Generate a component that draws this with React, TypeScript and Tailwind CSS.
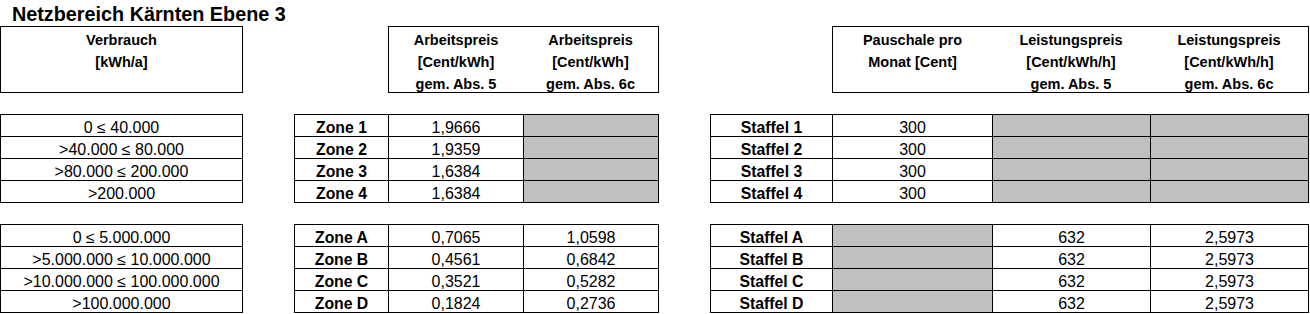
const font = { fontFamily: '"Liberation Sans", Arial, sans-serif' }

type Cell = { text?: string; gray?: boolean; bold?: boolean }

const verbrauch1 = ['0 ≤ 40.000', '>40.000 ≤ 80.000', '>80.000 ≤ 200.000', '>200.000']
const verbrauch2 = ['0 ≤ 5.000.000', '>5.000.000 ≤ 10.000.000', '>10.000.000 ≤ 100.000.000', '>100.000.000']

const zones1: Cell[][] = [
  [{ text: 'Zone 1', bold: true }, { text: '1,9666' }, { gray: true }],
  [{ text: 'Zone 2', bold: true }, { text: '1,9359' }, { gray: true }],
  [{ text: 'Zone 3', bold: true }, { text: '1,6384' }, { gray: true }],
  [{ text: 'Zone 4', bold: true }, { text: '1,6384' }, { gray: true }],
]

const zones2: Cell[][] = [
  [{ text: 'Zone A', bold: true }, { text: '0,7065' }, { text: '1,0598' }],
  [{ text: 'Zone B', bold: true }, { text: '0,4561' }, { text: '0,6842' }],
  [{ text: 'Zone C', bold: true }, { text: '0,3521' }, { text: '0,5282' }],
  [{ text: 'Zone D', bold: true }, { text: '0,1824' }, { text: '0,2736' }],
]

const staffel1: Cell[][] = [1, 2, 3, 4].map((n) => [
  { text: `Staffel ${n}`, bold: true },
  { text: '300' },
  { gray: true },
  { gray: true },
])

const staffel2: Cell[][] = ['A', 'B', 'C', 'D'].map((n) => [
  { text: `Staffel ${n}`, bold: true },
  { gray: true },
  { text: '632' },
  { text: '2,5973' },
])

function DataCell({ cell }: { cell: Cell }) {
  return (
    <div
      className={
        cell.gray
          ? 'h-[21px] bg-[#c0c0c0]'
          : cell.bold
            ? 'h-[21px] whitespace-nowrap bg-white pt-[2px] text-center text-[15.8px] font-bold leading-[21px] text-black'
            : 'h-[21px] whitespace-nowrap bg-white pt-[2px] text-center text-[16px] leading-[21px] text-black'
      }
    >
      {cell.text}
    </div>
  )
}

function Group({ verbrauch, zones, staffel }: { verbrauch: string[]; zones: Cell[][]; staffel: Cell[][] }) {
  return (
    <div className="flex">
      <div className="grid w-[243px] grid-cols-[241px] gap-px bg-black p-px">
        {verbrauch.map((v) => (
          <DataCell key={v} cell={{ text: v }} />
        ))}
      </div>
      <div className="w-[51px]" />
      <div className="grid w-[365px] grid-cols-[93px_134px_134px] gap-px bg-black p-px">
        {zones.flat().map((c, i) => (
          <DataCell key={i} cell={c} />
        ))}
      </div>
      <div className="w-[51px]" />
      <div className="grid w-[599px] grid-cols-[121px_159px_157px_157px] gap-px bg-black p-px">
        {staffel.flat().map((c, i) => (
          <DataCell key={i} cell={c} />
        ))}
      </div>
    </div>
  )
}

function HeadCol({ lines }: { lines: string[] }) {
  return (
    <div className="pt-[2px] text-center text-[14.5px] font-bold leading-[22px] text-black">
      {lines.map((l, i) => (
        <div key={i} className="h-[22px] whitespace-nowrap">
          {l}
        </div>
      ))}
    </div>
  )
}

export default function App() {
  return (
    <div className="h-[314px] w-[1310px] overflow-hidden bg-white" style={font}>
      <div className="h-[26px] pl-[12px] pt-px text-[19.8px] font-bold leading-[26px] text-black">
        Netzbereich Kärnten Ebene 3
      </div>

      <div className="flex">
        <div className="h-[67px] w-[243px] border border-black">
          <HeadCol lines={['Verbrauch', '[kWh/a]']} />
        </div>
        <div className="w-[145px]" />
        <div className="grid h-[67px] w-[271px] grid-cols-[134px_135px] border border-black">
          <HeadCol lines={['Arbeitspreis', '[Cent/kWh]', 'gem. Abs. 5']} />
          <HeadCol lines={['Arbeitspreis', '[Cent/kWh]', 'gem. Abs. 6c']} />
        </div>
        <div className="w-[173px]" />
        <div className="grid h-[67px] w-[477px] grid-cols-[159px_158px_158px] border border-black">
          <HeadCol lines={['Pauschale pro', 'Monat [Cent]']} />
          <HeadCol lines={['Leistungspreis', '[Cent/kWh/h]', 'gem. Abs. 5']} />
          <HeadCol lines={['Leistungspreis', '[Cent/kWh/h]', 'gem. Abs. 6c']} />
        </div>
      </div>

      <div className="mt-[21px]">
        <Group verbrauch={verbrauch1} zones={zones1} staffel={staffel1} />
      </div>
      <div className="mt-[21px]">
        <Group verbrauch={verbrauch2} zones={zones2} staffel={staffel2} />
      </div>
    </div>
  )
}
